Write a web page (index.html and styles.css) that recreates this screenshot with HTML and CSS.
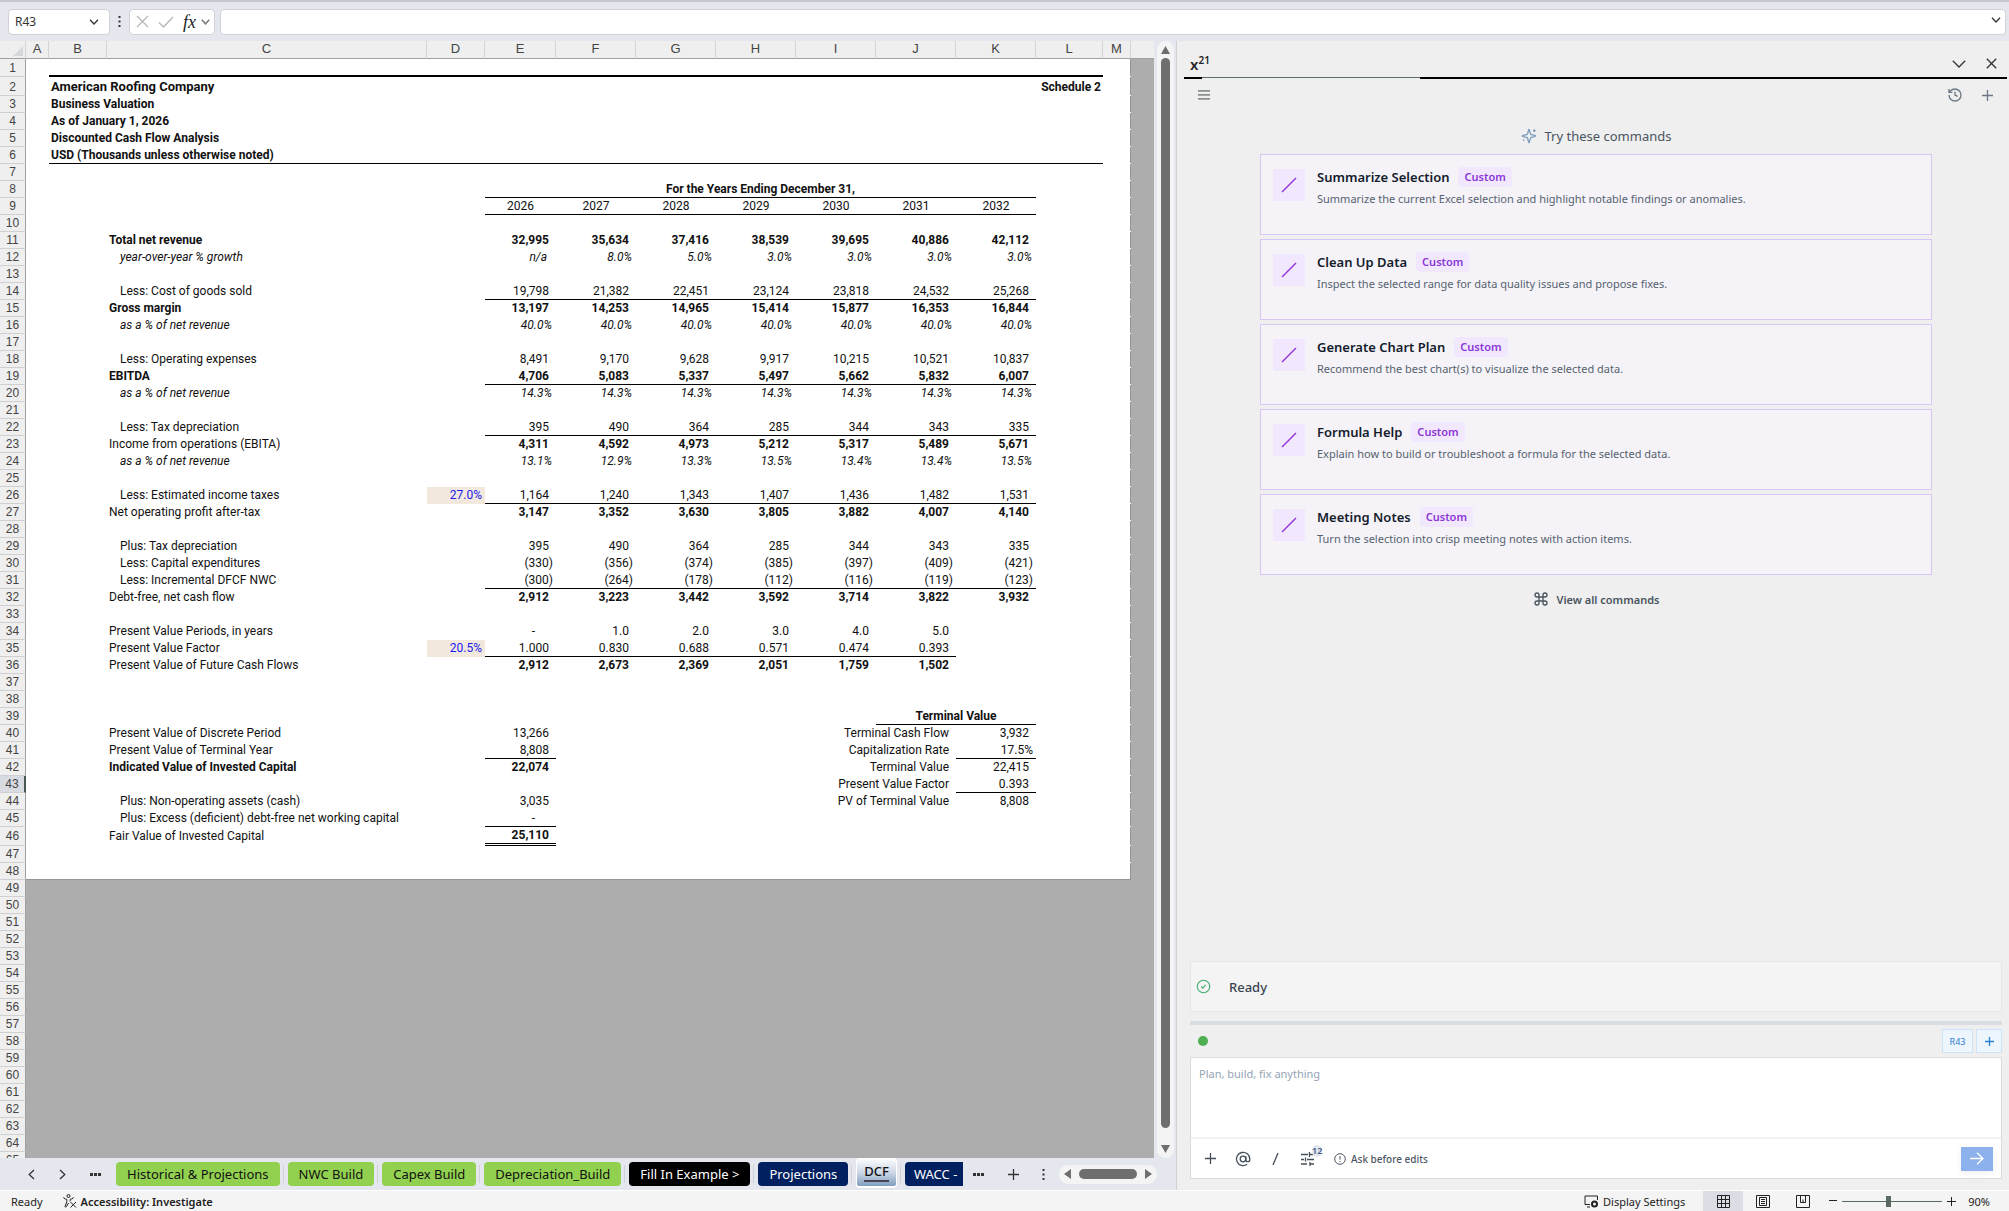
FILE: index.html
```html
<!DOCTYPE html>
<html lang="en">
<head>
<meta charset="utf-8">
<title>American Roofing Company - DCF</title>
<link rel="stylesheet" href="styles.css">
</head>
<body>
<header class="formula-bar">
  <button class="box name-box" type="button"><span>R43</span>
    <svg width="10" height="6" viewBox="0 0 10 6" class="ico"><path d="M1 .8 5 5 9 .8"/></svg></button>
  <svg class="grip" width="3" height="13" viewBox="0 0 3 13"><path d="M.5 1h2v2h-2zM.5 5.500h2v2h-2zM.5 10h2v2h-2z" fill="#333"/></svg>
  <div class="box fx-box">
    <button type="button" aria-label="Cancel"><svg width="13" height="13" viewBox="0 0 13 13" class="ico dim"><path d="M1 1l11 11M12 1 1 12"/></svg></button>
    <button type="button" aria-label="Enter"><svg width="16" height="12" viewBox="0 0 16 12" class="ico dim"><path d="M1 6.500 5.500 11 15 1"/></svg></button>
    <button type="button" class="fx" aria-label="Insert function">fx</button>
    <svg width="9" height="6" viewBox="0 0 9 6" class="ico mid"><path d="M.8.8 4.500 4.800 8.200.8"/></svg>
  </div>
  <div class="box formula-box">
    <input type="text" aria-label="Formula">
    <button type="button" aria-label="Expand formula bar"><svg width="10" height="6" viewBox="0 0 10 6" class="ico"><path d="M1 .8 5 5 9 .8"/></svg></button>
  </div>
</header>

<main class="work">
  <section class="workbook">
    <div class="grid-area">
      <div class="sheet">
        <table>
          <colgroup><col class="w-h"><col class="w-a"><col class="w-d"><col class="w-c"><col class="w-d"><col class="w-e"><col class="w-n"><col class="w-n"><col class="w-n"><col class="w-n"><col class="w-n"><col class="w-n"><col class="w-l"><col class="w-m"><col></colgroup>
          <thead><tr><th class="corner"><svg width="10" height="10" viewBox="0 0 10 10"><path d="M10 0v10H0z" fill="#d5d8dc"/></svg></th><th>A</th><th>B</th><th>C</th><th>D</th><th>E</th><th>F</th><th>G</th><th>H</th><th>I</th><th>J</th><th>K</th><th>L</th><th>M</th><th class="rest"></th></tr></thead>
          <tbody>
<tr class="r1"><th>1</th><td></td><td colspan="11" class="thick"></td><td class="end"></td></tr>
<tr class="r2"><th>2</th><td></td><td colspan="10" class="t title">American Roofing Company</td><td class="t r">Schedule 2</td><td class="end"></td></tr>
<tr><th>3</th><td></td><td colspan="11" class="t">Business Valuation</td><td class="end"></td></tr>
<tr><th>4</th><td></td><td colspan="11" class="t">As of January 1, 2026</td><td class="end"></td></tr>
<tr><th>5</th><td></td><td colspan="11" class="t">Discounted Cash Flow Analysis</td><td class="end"></td></tr>
<tr><th>6</th><td></td><td colspan="11" class="t u">USD (Thousands unless otherwise noted)</td><td class="end"></td></tr>
<tr><th>7</th><td colspan="13" class="end"></td></tr>
<tr><th>8</th><td colspan="4"></td><td colspan="7" class="u c b">For the Years Ending December 31,</td><td colspan="2" class="end"></td></tr>
<tr class="u c"><th>9</th><td colspan="4"></td><td>2026</td><td>2027</td><td>2028</td><td>2029</td><td>2030</td><td>2031</td><td>2032</td><td colspan="2" class="end"></td></tr>
<tr><th>10</th><td colspan="13" class="end"></td></tr>
<tr class="n b"><th>11</th><td colspan="2"></td><td>Total net revenue</td><td></td><td>32,995</td><td>35,634</td><td>37,416</td><td>38,539</td><td>39,695</td><td>40,886</td><td>42,112</td><td colspan="2" class="end"></td></tr>
<tr class="p in"><th>12</th><td colspan="2"></td><td>year-over-year % growth</td><td></td><td class="na">n/a</td><td>8.0%</td><td>5.0%</td><td>3.0%</td><td>3.0%</td><td>3.0%</td><td>3.0%</td><td colspan="2" class="end"></td></tr>
<tr><th>13</th><td colspan="13" class="end"></td></tr>
<tr class="n u in"><th>14</th><td colspan="2"></td><td>Less: Cost of goods sold</td><td></td><td>19,798</td><td>21,382</td><td>22,451</td><td>23,124</td><td>23,818</td><td>24,532</td><td>25,268</td><td colspan="2" class="end"></td></tr>
<tr class="n b"><th>15</th><td colspan="2"></td><td>Gross margin</td><td></td><td>13,197</td><td>14,253</td><td>14,965</td><td>15,414</td><td>15,877</td><td>16,353</td><td>16,844</td><td colspan="2" class="end"></td></tr>
<tr class="p in"><th>16</th><td colspan="2"></td><td>as a % of net revenue</td><td></td><td>40.0%</td><td>40.0%</td><td>40.0%</td><td>40.0%</td><td>40.0%</td><td>40.0%</td><td>40.0%</td><td colspan="2" class="end"></td></tr>
<tr><th>17</th><td colspan="13" class="end"></td></tr>
<tr class="n in"><th>18</th><td colspan="2"></td><td>Less: Operating expenses</td><td></td><td>8,491</td><td>9,170</td><td>9,628</td><td>9,917</td><td>10,215</td><td>10,521</td><td>10,837</td><td colspan="2" class="end"></td></tr>
<tr class="n b u"><th>19</th><td colspan="2"></td><td>EBITDA</td><td></td><td>4,706</td><td>5,083</td><td>5,337</td><td>5,497</td><td>5,662</td><td>5,832</td><td>6,007</td><td colspan="2" class="end"></td></tr>
<tr class="p in"><th>20</th><td colspan="2"></td><td>as a % of net revenue</td><td></td><td>14.3%</td><td>14.3%</td><td>14.3%</td><td>14.3%</td><td>14.3%</td><td>14.3%</td><td>14.3%</td><td colspan="2" class="end"></td></tr>
<tr><th>21</th><td colspan="13" class="end"></td></tr>
<tr class="n u in"><th>22</th><td colspan="2"></td><td>Less: Tax depreciation</td><td></td><td>395</td><td>490</td><td>364</td><td>285</td><td>344</td><td>343</td><td>335</td><td colspan="2" class="end"></td></tr>
<tr class="n bn"><th>23</th><td colspan="2"></td><td>Income from operations (EBITA)</td><td></td><td>4,311</td><td>4,592</td><td>4,973</td><td>5,212</td><td>5,317</td><td>5,489</td><td>5,671</td><td colspan="2" class="end"></td></tr>
<tr class="p in"><th>24</th><td colspan="2"></td><td>as a % of net revenue</td><td></td><td>13.1%</td><td>12.9%</td><td>13.3%</td><td>13.5%</td><td>13.4%</td><td>13.4%</td><td>13.5%</td><td colspan="2" class="end"></td></tr>
<tr><th>25</th><td colspan="13" class="end"></td></tr>
<tr class="n u in"><th>26</th><td colspan="2"></td><td>Less: Estimated income taxes</td><td class="input">27.0%</td><td>1,164</td><td>1,240</td><td>1,343</td><td>1,407</td><td>1,436</td><td>1,482</td><td>1,531</td><td colspan="2" class="end"></td></tr>
<tr class="n bn"><th>27</th><td colspan="2"></td><td>Net operating profit after-tax</td><td></td><td>3,147</td><td>3,352</td><td>3,630</td><td>3,805</td><td>3,882</td><td>4,007</td><td>4,140</td><td colspan="2" class="end"></td></tr>
<tr><th>28</th><td colspan="13" class="end"></td></tr>
<tr class="n in"><th>29</th><td colspan="2"></td><td>Plus: Tax depreciation</td><td></td><td>395</td><td>490</td><td>364</td><td>285</td><td>344</td><td>343</td><td>335</td><td colspan="2" class="end"></td></tr>
<tr class="n neg in"><th>30</th><td colspan="2"></td><td>Less: Capital expenditures</td><td></td><td>(330)</td><td>(356)</td><td>(374)</td><td>(385)</td><td>(397)</td><td>(409)</td><td>(421)</td><td colspan="2" class="end"></td></tr>
<tr class="n neg u in"><th>31</th><td colspan="2"></td><td>Less: Incremental DFCF NWC</td><td></td><td>(300)</td><td>(264)</td><td>(178)</td><td>(112)</td><td>(116)</td><td>(119)</td><td>(123)</td><td colspan="2" class="end"></td></tr>
<tr class="n bn"><th>32</th><td colspan="2"></td><td>Debt-free, net cash flow</td><td></td><td>2,912</td><td>3,223</td><td>3,442</td><td>3,592</td><td>3,714</td><td>3,822</td><td>3,932</td><td colspan="2" class="end"></td></tr>
<tr><th>33</th><td colspan="13" class="end"></td></tr>
<tr class="n"><th>34</th><td colspan="2"></td><td>Present Value Periods, in years</td><td></td><td class="dash">-</td><td>1.0</td><td>2.0</td><td>3.0</td><td>4.0</td><td>5.0</td><td colspan="3" class="end"></td></tr>
<tr class="n u"><th>35</th><td colspan="2"></td><td>Present Value Factor</td><td class="input">20.5%</td><td>1.000</td><td>0.830</td><td>0.688</td><td>0.571</td><td>0.474</td><td>0.393</td><td colspan="3" class="end"></td></tr>
<tr class="n bn"><th>36</th><td colspan="2"></td><td>Present Value of Future Cash Flows</td><td></td><td>2,912</td><td>2,673</td><td>2,369</td><td>2,051</td><td>1,759</td><td>1,502</td><td colspan="3" class="end"></td></tr>
<tr><th>37</th><td colspan="13" class="end"></td></tr>
<tr><th>38</th><td colspan="13" class="end"></td></tr>
<tr><th>39</th><td colspan="9"></td><td colspan="2" class="u c b">Terminal Value</td><td colspan="2" class="end"></td></tr>
<tr class="n"><th>40</th><td colspan="2"></td><td>Present Value of Discrete Period</td><td></td><td>13,266</td><td colspan="5">Terminal Cash Flow</td><td>3,932</td><td colspan="2" class="end"></td></tr>
<tr class="n"><th>41</th><td colspan="2"></td><td>Present Value of Terminal Year</td><td></td><td class="u">8,808</td><td colspan="5">Capitalization Rate</td><td class="u pc">17.5%</td><td colspan="2" class="end"></td></tr>
<tr class="n"><th>42</th><td colspan="2"></td><td class="b">Indicated Value of Invested Capital</td><td></td><td class="b">22,074</td><td colspan="5">Terminal Value</td><td>22,415</td><td colspan="2" class="end"></td></tr>
<tr class="n"><th class="active">43</th><td colspan="2"></td><td></td><td></td><td></td><td colspan="5">Present Value Factor</td><td class="u">0.393</td><td colspan="2" class="end"></td></tr>
<tr class="n in"><th>44</th><td colspan="2"></td><td>Plus: Non-operating assets (cash)</td><td></td><td>3,035</td><td colspan="5">PV of Terminal Value</td><td>8,808</td><td colspan="2" class="end"></td></tr>
<tr class="n in"><th>45</th><td colspan="2"></td><td>Plus: Excess (deficient) debt-free net working capital</td><td></td><td class="u dash">-</td><td colspan="8" class="end"></td></tr>
<tr class="n r46"><th>46</th><td colspan="2"></td><td>Fair Value of Invested Capital</td><td></td><td class="dbl b">25,110</td><td colspan="8" class="end"></td></tr>
<tr><th>47</th><td colspan="13" class="end"></td></tr>
<tr class="last"><th>48</th><td colspan="13" class="end"></td></tr>
<tr><th>49</th></tr><tr><th>50</th></tr><tr><th>51</th></tr><tr><th>52</th></tr><tr><th>53</th></tr><tr><th>54</th></tr><tr><th>55</th></tr><tr><th>56</th></tr><tr><th>57</th></tr><tr><th>58</th></tr><tr><th>59</th></tr><tr><th>60</th></tr><tr><th>61</th></tr><tr><th>62</th></tr><tr><th>63</th></tr><tr><th>64</th></tr><tr><th>65</th></tr>
          </tbody>
        </table>
      </div>
      <div class="vscroll">
        <svg width="9" height="8" viewBox="0 0 9 8"><path d="M4.500 0 9 8H0z" fill="#6e6e6e"/></svg>
        <div class="thumb"></div>
        <svg width="9" height="8" viewBox="0 0 9 8"><path d="M0 0h9L4.500 8z" fill="#6e6e6e"/></svg>
      </div>
    </div>
    <nav class="tabs">
      <div class="tab-nav">
        <button type="button" aria-label="Previous sheet"><svg width="7" height="11" viewBox="0 0 7 11" class="ico"><path d="M6 1 1.200 5.500 6 10"/></svg></button>
        <button type="button" aria-label="Next sheet"><svg width="7" height="11" viewBox="0 0 7 11" class="ico"><path d="M1 1l4.800 4.500L1 10"/></svg></button>
        <button type="button" aria-label="More sheets"><svg width="11" height="3" viewBox="0 0 11 3"><path d="M0 0h3v3H0zM4 0h3v3H4zM8 0h3v3H8z" fill="#333"/></svg></button>
      </div>
      <div class="tab-list">
        <button type="button" class="tab green">Historical &amp; Projections</button><i></i>
        <button type="button" class="tab green">NWC Build</button><i></i>
        <button type="button" class="tab green">Capex Build</button><i></i>
        <button type="button" class="tab green">Depreciation_Build</button><i></i>
        <button type="button" class="tab black">Fill In Example &gt;</button><i></i>
        <button type="button" class="tab navy">Projections</button><i></i>
        <button type="button" class="tab current"><span>DCF</span></button><i></i>
        <button type="button" class="tab navy cut">WACC -</button>
      </div>
      <div class="tab-tools">
        <button type="button" aria-label="All sheets"><svg width="11" height="3" viewBox="0 0 11 3"><path d="M0 0h3v3H0zM4 0h3v3H4zM8 0h3v3H8z" fill="#333"/></svg></button>
        <button type="button" aria-label="New sheet"><svg width="11" height="11" viewBox="0 0 11 11" class="ico"><path d="M5.500 0v11M0 5.500h11"/></svg></button>
        <svg class="grip" width="3" height="11" viewBox="0 0 3 11"><path d="M.5 0h2v2h-2zM.5 4.500h2v2h-2zM.5 9h2v2h-2z" fill="#333"/></svg>
      </div>
      <div class="hscroll">
        <svg width="7" height="10" viewBox="0 0 7 10"><path d="M7 0v10L0 5z" fill="#6e6e6e"/></svg>
        <div class="thumb"></div>
        <svg width="7" height="10" viewBox="0 0 7 10"><path d="M0 0v10l7-5z" fill="#6e6e6e"/></svg>
      </div>
    </nav>
  </section>

  <aside class="pane">
    <div class="pane-title">
      <h1>x<sup>21</sup></h1>
      <button type="button" aria-label="Pane options"><svg width="14" height="8" viewBox="0 0 14 8" class="ico"><path d="M.8.8 7 7 13.200.8"/></svg></button>
      <button type="button" aria-label="Close"><svg width="11" height="11" viewBox="0 0 11 11" class="ico"><path d="M.8.8l9.400 9.400M10.200.8.8 10.200"/></svg></button>
    </div>
    <div class="rule"><span></span></div>
    <div class="pane-tools">
      <button type="button" aria-label="Menu"><svg width="12" height="10" viewBox="0 0 12 10"><path d="M0 .9h12M0 4.900h12M0 8.900h12" stroke="#8a9090" stroke-width="1.600"/></svg></button>
      <button type="button" class="push" aria-label="History"><svg width="16" height="16" viewBox="0 0 24 24" class="lu"><path d="M3 12a9 9 0 1 0 9-9 9.750 9.750 0 0 0-6.740 2.740L3 8"/><path d="M3 3v5h5M12 7v5l4 2"/></svg></button>
      <button type="button" aria-label="New chat"><svg width="11" height="11" viewBox="0 0 11 11" class="lu"><path d="M5.500 0v11M0 5.500h11" stroke-width="1.300"/></svg></button>
    </div>

    <div class="commands">
      <h2><svg width="16" height="16" viewBox="0 0 24 24" class="spark"><path d="M9.940 15.500A2 2 0 0 0 8.500 14.060l-6.140-1.580a.5.5 0 0 1 0-.96L8.500 9.940A2 2 0 0 0 9.940 8.500l1.580-6.140a.5.5 0 0 1 .96 0L14.060 8.500a2 2 0 0 0 1.440 1.440l6.140 1.580a.5.5 0 0 1 0 .96L15.500 14.060a2 2 0 0 0-1.440 1.440l-1.580 6.140a.5.5 0 0 1-.96 0z"/><path d="M20 2v4M22 4h-4M4 17v2M5 18H3"/></svg>Try these commands</h2>
      <button type="button" class="card"><span class="slash"><svg width="16" height="16" viewBox="0 0 16 16"><path d="M1 15 15 1"/></svg></span><span class="card-body"><span class="card-head"><b>Summarize Selection</b><em>Custom</em></span><span class="desc">Summarize the current Excel selection and highlight notable findings or anomalies.</span></span></button>
      <button type="button" class="card"><span class="slash"><svg width="16" height="16" viewBox="0 0 16 16"><path d="M1 15 15 1"/></svg></span><span class="card-body"><span class="card-head"><b>Clean Up Data</b><em>Custom</em></span><span class="desc">Inspect the selected range for data quality issues and propose fixes.</span></span></button>
      <button type="button" class="card"><span class="slash"><svg width="16" height="16" viewBox="0 0 16 16"><path d="M1 15 15 1"/></svg></span><span class="card-body"><span class="card-head"><b>Generate Chart Plan</b><em>Custom</em></span><span class="desc">Recommend the best chart(s) to visualize the selected data.</span></span></button>
      <button type="button" class="card"><span class="slash"><svg width="16" height="16" viewBox="0 0 16 16"><path d="M1 15 15 1"/></svg></span><span class="card-body"><span class="card-head"><b>Formula Help</b><em>Custom</em></span><span class="desc">Explain how to build or troubleshoot a formula for the selected data.</span></span></button>
      <button type="button" class="card"><span class="slash"><svg width="16" height="16" viewBox="0 0 16 16"><path d="M1 15 15 1"/></svg></span><span class="card-body"><span class="card-head"><b>Meeting Notes</b><em>Custom</em></span><span class="desc">Turn the selection into crisp meeting notes with action items.</span></span></button>
      <button type="button" class="view-all"><svg width="16" height="16" viewBox="0 0 24 24" class="lu"><path d="M15 6v12a3 3 0 1 0 3-3H6a3 3 0 1 0 3 3V6a3 3 0 1 0-3 3h12a3 3 0 1 0-3-3"/></svg>View all commands</button>
    </div>

    <div class="ready"><svg width="15" height="15" viewBox="0 0 24 24"><circle cx="12" cy="12" r="10"/><path d="m8.500 12 2.500 2.500 4.500-5"/></svg>Ready</div>
    <div class="splitter"></div>
    <div class="context"><span class="dot"></span><button type="button" class="chip">R43</button><button type="button" class="chip add" aria-label="Add context"><svg width="9" height="9" viewBox="0 0 9 9"><path d="M4.500 0v9M0 4.500h9"/></svg></button></div>
    <div class="composer">
      <textarea aria-label="Message" placeholder="Plan, build, fix anything"></textarea>
      <div class="composer-tools">
        <button type="button" aria-label="Attach"><svg width="11" height="11" viewBox="0 0 11 11" class="dk"><path d="M5.500 0v11M0 5.500h11"/></svg></button>
        <button type="button" class="mention" aria-label="Mention"><svg width="16" height="16" viewBox="0 0 24 24" class="dk at"><circle cx="12" cy="12" r="4.200"/><path d="M16.200 8v5a3 3 0 0 0 6 0v-1a10 10 0 1 0-4 8"/></svg></button>
        <button type="button" aria-label="Commands"><svg width="7" height="12" viewBox="0 0 7 12" class="dk"><path d="M1 12 6 0"/></svg></button>
        <button type="button" class="settings" aria-label="Tools"><svg width="14" height="14" viewBox="0 0 14 14" class="dk"><path d="M0 2.500h7M9 2.500h4M8.500 0v5M0 7.500h3M6 7.500h7M4.500 5.500v4M0 12h6M9 12h4M9 10v4"/></svg><sup>12</sup></button>
        <button type="button" class="ask"><svg width="12" height="12" viewBox="0 0 12 12"><circle cx="6" cy="6" r="5.300"/><path d="M6 3v3.700M6 8v1.200"/></svg>Ask before edits</button>
        <button type="button" class="send" aria-label="Send"><svg width="14" height="13" viewBox="0 0 14 13"><path d="M0 6.500h13M7 .7l6 5.800-6 5.800"/></svg></button>
      </div>
    </div>
  </aside>
</main>

<footer class="status">
  <span class="state">Ready</span>
  <button type="button" class="access"><svg width="14" height="14" viewBox="0 0 14 14"><circle cx="5.500" cy="2" r="1.500"/><path d="M.8 3.200c-.6 1 .4 1.400 3 2.200v2.400L2 12.500c.2 1 1.200.8 1.500 0L5.500 9M10.200 3.200c.6 1-.4 1.400-3 2.200v1.800M7.500 8l5.500 5.500M13 8l-5.500 5.500"/></svg>Accessibility: Investigate</button>
  <button type="button" class="display"><svg width="15" height="13" viewBox="0 0 15 13"><path d="M6 9.500H1V1h12.500v4M3 12h3"/><circle cx="10.500" cy="9" r="2.500" stroke-width="2"/></svg>Display Settings</button>
  <button type="button" class="view on" aria-label="Normal view"><svg width="13" height="13" viewBox="0 0 13 13"><path d="M.5.5h12v12H.5zM4.500.5v12M8.500.5v12M.5 4.500h12M.5 8.500h12"/></svg></button>
  <button type="button" class="view" aria-label="Page layout"><svg width="14" height="13" viewBox="0 0 14 13"><path d="M.5.5h13v12H.5zM3.500 2.500h7v8h-7zM5 4.500h4M5 6.500h4M5 8.500h4"/></svg></button>
  <button type="button" class="view" aria-label="Page break preview"><svg width="14" height="13" viewBox="0 0 14 13"><path d="M.5.5h13v12H.5zM4.500.5v7h5v-7M7 7.500v-3"/></svg></button>
  <div class="zoom">
    <button type="button" aria-label="Zoom out"><svg width="8" height="9" viewBox="0 0 8 9"><path d="M0 3.500h8"/></svg></button>
    <input type="range" min="0" max="100" value="46" aria-label="Zoom">
    <button type="button" aria-label="Zoom in"><svg width="9" height="9" viewBox="0 0 9 9"><path d="M0 4.500h9M4.500 0v9"/></svg></button>
    <span>90%</span>
  </div>
</footer>
</body>
</html>
```
FILE: styles.css
```css
* { box-sizing: border-box; }
html, body { height: 100%; margin: 0; }
body {
  display: flex; flex-direction: column; overflow: hidden;
  font-family: "Noto Sans", "Open Sans", sans-serif; font-size: 13px; color: #222;
  background: #e4e8ee;
}
button { padding: 0; border: 0; background: none; font: inherit; color: inherit; }
svg { display: block; flex: none; fill: none; }
.ico { stroke: #333; stroke-width: 1.300; }
.ico.dim { stroke: #b4b6ba; }
.ico.mid { stroke: #777; stroke-width: 1.500; }
.lu { stroke: #6b7785; stroke-width: 2; }
.dk { stroke: #45505a; stroke-width: 1.300; }
.dk.at { stroke-width: 2; }

/* Formula bar */
.formula-bar {
  display: flex; align-items: center; flex: none; height: 41px;
  padding: 0 3px 0 8px; border-top: 2px solid #c6c9cd;
}
.box {
  display: flex; align-items: center; height: 26px;
  background: #fff; border: 1px solid #d0d2d6; border-radius: 4px;
}
.name-box { width: 102px; padding: 0 10px 0 6px; justify-content: space-between; font-size: 12px; color: #333; }
.formula-bar .grip { margin: 0 8px; }
.fx-box { width: 86px; padding: 0 1px 0 6px; gap: 9px; margin-right: 5px; }
.fx { font: italic 18px/22px "Liberation Serif", serif; color: #222; margin-right: -4px; }
.formula-box { flex: 1; padding-right: 4px; }
.formula-box input { flex: 1; height: 22px; border: 0; outline: 0; background: none; }
.formula-box button { margin-bottom: 3px; }

/* Work area */
.work { display: flex; flex: 1; min-height: 0; }
.workbook { display: flex; flex-direction: column; flex: 1; min-width: 0; }
.grid-area { display: flex; flex: 1; min-height: 0; padding-right: 2px; }
.sheet { flex: 1; min-width: 0; overflow: hidden; background: #adadad; }
table {
  width: 100%; table-layout: fixed; border-collapse: separate; border-spacing: 0;
  font: 12px/16px Roboto, sans-serif; color: #111;
}
.w-h { width: 26px; } .w-a { width: 23px; } .w-d { width: 58px; } .w-c { width: 320px; }
.w-e { width: 71px; } .w-n { width: 80px; } .w-l { width: 67px; } .w-m { width: 28px; }
td, th { height: 17px; padding: 0 2px; white-space: nowrap; border-bottom: 1px solid transparent; }
td { background: #fff; text-align: left; }
th {
  font: 12px/16px "Liberation Sans Narrow", "Liberation Sans", sans-serif; color: #444;
  background: #efefef; border-bottom-color: #d0d0d0; border-right: 1px solid #a0a0a0; padding: 0;
}
thead th { height: 18px; line-height: 15px; vertical-align: top; font-size: 13px; border-bottom-color: #a0a0a0; border-right-color: #d4d4d4; }
thead .corner svg { margin: 5px 0 0 13px; }
thead .rest { border-right: 0; }
.r1 > * { height: 18px; }
.r2 > * { height: 19px; padding-top: 1px; }
.r46 > * { height: 18px; }
td.end { box-shadow: inset -1px 0 #959595; }
.last td { border-bottom-color: #959595; }
.thick { border-bottom: 2px solid #000; }
td.u { border-bottom-color: #000; }
.dbl { border-bottom: 3px double #000; }
.t, .b, .bn td { font-weight: 700; }
.bn td:nth-child(3) { font-weight: 400; }
.title { font-size: 13px; }
.r { text-align: right; }
.c, .c td { text-align: center; }
tr.u td:nth-child(n+5):not(.end), .c.u td:nth-child(n+3):not(.end) { border-bottom-color: #000; }
.n td:nth-child(n+4) { text-align: right; padding-right: 7px; }
.p td { font-style: italic; font-weight: 400; }
.p td:nth-child(n+4), .n.neg td:nth-child(n+4), .n td.pc, .n td.input { text-align: right; padding-right: 3px; }
.p td:nth-child(n+4) { padding-right: 4px; }
.p td.na { padding-right: 9px; }
.in td:nth-child(3) { padding-left: 13px; }
.n td.dash { padding-right: 21px; }
td.input { background: #f2e8de; color: #1a1af0; }
th.active { background: #d8dce2; border-right: 2px solid #4a5a50; }

.vscroll {
  display: flex; flex-direction: column; align-items: center; gap: 4px; width: 17px;
  margin-left: 3px; padding: 5px 0; background: #f4f4f4; border-radius: 9px;
}
.vscroll .thumb { flex: 1; width: 9px; margin-bottom: 13px; border-radius: 5px; background: #6e6e6e; }

/* Sheet tabs */
.tabs { display: flex; align-items: center; flex: none; height: 32px; padding-right: 19px; font-size: 13px; }
.tab-nav { display: flex; align-items: center; justify-content: space-between; width: 116px; padding: 0 15px 0 28px; }
.tab-list { display: flex; align-items: center; flex: 1; min-width: 0; overflow: hidden; }
.tab-list i { flex: none; width: 1px; height: 18px; margin: 0 4px 0 3px; background: #cfd2d6; }
.tab { flex: none; height: 24px; padding: 0 11px; border-radius: 4px; color: #111; line-height: 24px; }
.green { background: #92d050; }
.black { background: #000; color: #fff; }
.navy { background: #002060; color: #fff; }
.current {
  height: 30px; padding: 0 7px; font-weight: 500; line-height: 18px; margin-bottom: 2px;
  border: 1px solid #fff; border-width: 0 1px 2px; background: linear-gradient(#fff, #c8d3e3 55%, #7f9fbe);
}
.current span { display: block; border-bottom: 2px solid #445; }
.cut { flex: 1; min-width: 0; padding: 0 0 0 9px; border-radius: 4px 0 0 4px; overflow: hidden; text-align: left; }
.tab-tools { display: flex; align-items: center; justify-content: space-between; width: 96px; padding: 0 14px 0 10px; }
.hscroll {
  display: flex; align-items: center; justify-content: space-between; width: 98px; height: 19px;
  padding: 0 5px; background: #f4f4f4; border-radius: 9px;
}
.hscroll .thumb { width: 58px; height: 10px; border-radius: 5px; background: #6e6e6e; }

/* Task pane */
.pane {
  display: flex; flex-direction: column; flex: none; width: 833px; padding-left: 7px;
  background: #efefef; border-left: 1px solid #cdd1d6;
}
.pane-title { display: flex; align-items: center; gap: 20px; height: 36px; padding: 9px 12px 0 6px; }
.pane-title h1 { flex: 1; margin: 0; font-size: 15px; line-height: 20px; font-weight: 600; }
.pane-title sup { font-size: 10px; line-height: 0; vertical-align: 6px; }
.rule { height: 2px; margin-right: 2px; background: #000; }
.rule span { display: block; width: 218px; height: 2px; margin-left: 18px; background: #5c6c66; border-bottom: 1px solid #efefef; }
.pane-tools { display: flex; align-items: center; gap: 19px; height: 32px; padding: 0 16px 0 14px; }
.push { margin-left: auto; }
.commands { display: flex; flex-direction: column; align-items: stretch; gap: 4px; width: 672px; max-width: 100%; margin: 11px 0 0 76px; flex: 1; }
.commands h2 {
  display: flex; align-items: center; justify-content: center; gap: 8px; height: 28px; margin: 0;
  font-size: 13px; font-weight: 400; color: #4a5560;
}
.spark { stroke: #7d9cbd; stroke-width: 2; }
.card {
  display: flex; flex: none; align-items: flex-start; gap: 12px; height: 81px; padding: 12px;
  background: #f5f3f8; border: 1px solid #dac6f5; text-align: left;
}
.slash { display: flex; align-items: center; justify-content: center; width: 32px; height: 32px; margin-top: 2px; background: #f1e8fd; }
.slash svg { stroke: #9135d8; stroke-width: 1.500; }
.card-body { display: flex; flex-direction: column; gap: 4px; }
.card-head { display: flex; align-items: center; gap: 9px; height: 20px; }
.card-head b { font-weight: 600; color: #141c2c; }
.card-head em {
  height: 20px; padding: 0 6px; border-radius: 4px; background: #f1e8fd;
  font-size: 11px; font-style: normal; font-weight: 600; line-height: 20px; color: #8b35d6;
}
.desc { font-size: 11px; line-height: 16px; color: #56626f; }
.view-all { display: flex; align-items: center; justify-content: center; gap: 8px; height: 24px; margin-top: 8px; font-size: 11px; font-weight: 600; color: #4a5560; }
.view-all .lu { stroke: #4a5560; }
.ready {
  display: flex; align-items: center; gap: 18px; height: 51px; margin: 0 7px 9px 6px; padding-left: 5px;
  background: #f4f4f4; border: 1px solid #e4e7eb; font-weight: 500; color: #3b4450;
}
.ready svg { stroke: #3fae6e; stroke-width: 1.800; }
.splitter { height: 4px; margin: 0 7px 0 6px; background: #dadde3; }
.context { display: flex; align-items: center; gap: 3px; height: 32px; margin: 0 7px 0 6px; }
.dot { width: 10px; height: 10px; margin: 0 auto 0 8px; border-radius: 50%; background: #4caf50; }
.chip { width: 31px; height: 24px; background: #edf5fd; border: 1px solid #cde2f6; color: #2b7fd0; font-size: 9px; }
.chip.add { display: flex; align-items: center; justify-content: center; width: 26px; }
.chip svg { stroke: #2b7fd0; stroke-width: 1.300; }
.composer { display: flex; flex-direction: column; height: 122px; margin: 0 7px 11px 6px; background: #fff; border: 1px solid #d8dbe0; }
.composer textarea { flex: 1; padding: 8px; border: 0; outline: 0; resize: none; background: none; font: 11px/16px "Noto Sans", sans-serif; color: #222; }
.composer textarea::placeholder { color: #94a3b5; }
.composer-tools { display: flex; align-items: center; height: 41px; padding: 0 8px 0 14px; border-top: 2px solid #f0f1f4; }
.mention { margin: 0 21px 0 19px; }
.settings { position: relative; margin: 0 19px 0 22px; }
.settings sup { position: absolute; left: 11px; top: -7px; border-radius: 7px; background: #e4e7ec; font-size: 9px; line-height: 12px; font-weight: 600; color: #3b5b8c; }
.ask { display: flex; align-items: center; gap: 5px; font-size: 10px; font-weight: 500; color: #4d5865; }
.ask svg { stroke: #4d5865; }
.send { display: flex; align-items: center; justify-content: center; width: 32px; height: 24px; margin-left: auto; background: #8cb1ec; box-shadow: 0 2px 6px #0001; }
.send svg { stroke: #fff; stroke-width: 1.300; }

/* Status bar */
.status {
  display: flex; align-items: center; flex: none; height: 21px; padding: 0 19px 0 11px;
  background: #f4f4f4; border-top: 1px solid #fff; font-size: 11px; color: #222;
}
.status svg { stroke: #222; }
.access, .display { display: flex; align-items: center; gap: 4px; }
.access { margin-left: 20px; font-weight: 600; }
.display { margin: 0 18px 0 auto; }
.view { display: flex; align-items: center; justify-content: center; width: 40px; height: 20px; }
.view.on { background: #dadde3; }
.zoom { display: flex; align-items: center; gap: 5px; margin-left: 6px; }
.zoom input { appearance: none; width: 100px; height: 11px; margin: 0; background: linear-gradient(#5a6a60, #5a6a60) center / 100% 1px no-repeat; }
.zoom input::-webkit-slider-thumb { appearance: none; width: 5px; height: 11px; background: #5a6a60; }
.zoom span { margin-left: 7px; }
```
